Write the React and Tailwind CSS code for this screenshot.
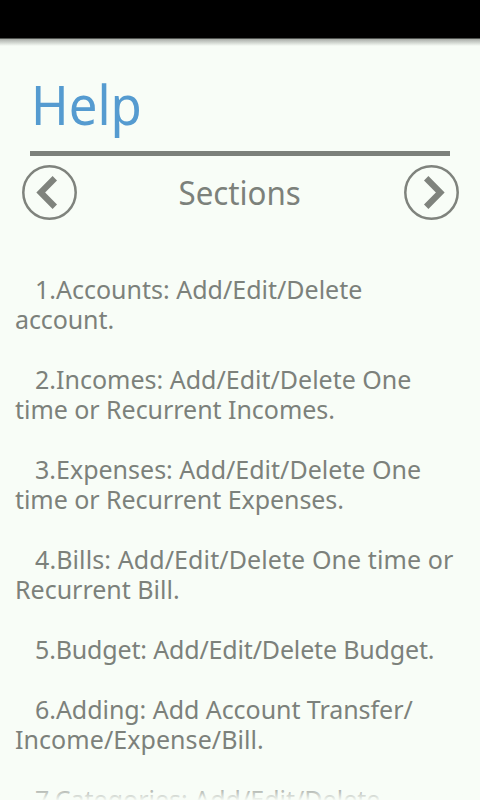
const sections = [
  { first: "1.Accounts: Add/Edit/Delete", second: "account.", rest: "tracking-[-0.1px]" },
  { first: "2.Incomes: Add/Edit/Delete One", second: "time or Recurrent Incomes.", rest: "tracking-[-0.04px]" },
  { first: "3.Expenses: Add/Edit/Delete One", second: "time or Recurrent Expenses.", rest: "tracking-[-0.06px]" },
  { first: "4.Bills: Add/Edit/Delete One time or", second: "Recurrent Bill.", lead: "tracking-[0.1px]" },
  { first: "5.Budget: Add/Edit/Delete Budget.", lead: "tracking-[-0.16px]" },
  { first: "6.Adding: Add Account Transfer/", second: "Income/Expense/Bill.", lead: "tracking-[-0.05px]", rest: "tracking-[0.06px]" },
  { first: "7.Categories: Add/Edit/Delete" },
];

function Arrow({ flip }) {
  return (
    <svg viewBox="0 0 55 55" className={flip ? "size-[55px] -scale-x-100" : "size-[55px]"} fill="none" stroke="#7f837d">
      <circle cx="27.5" cy="27.5" r="26.2" strokeWidth="2.5" />
      <path d="M32.8 13.2 L18.7 27.5 L32.8 41.8" strokeWidth="6.2" />
    </svg>
  );
}

export default function App() {
  return (
    <div className="relative flex h-[800px] w-[480px] flex-col overflow-hidden bg-[#f8fdf7] font-['Noto_Sans',sans-serif] text-[#7c817b]">
      <div className="h-[38px] shrink-0 bg-black" />
      <div className="h-px shrink-0 bg-[#50534f]" />
      <div className="h-[7px] shrink-0 bg-linear-to-b from-[#a9ada8] to-[#f8fdf7]" />
      <h1 className="mx-[30px] h-[110px] shrink-0 border-b-5 border-[#7c817b] pt-[19px] pl-px text-[55px] leading-[78px] text-[#559bd0]">
        <span className="inline-block origin-left scale-x-[0.925]">Help</span>
      </h1>
      <div className="mt-[9px] flex h-[55px] shrink-0 items-center justify-between pr-[21px] pl-[22px]">
        <Arrow />
        <span className="scale-x-[0.947] pr-[2px] text-[33px] leading-[55px]">Sections</span>
        <Arrow flip />
      </div>
      <div className="mt-[54px] shrink-0 px-[15px] text-[25px] leading-[30px] whitespace-nowrap">
        {sections.map(({ first, second, lead = "", rest = "" }) => (
          <p key={first} className="mb-[30px]">
            <span className={"block pl-5 " + lead}>{first}</span>
            {second && <span className={"block " + rest}>{second}</span>}
          </p>
        ))}
      </div>
      <div className="absolute inset-x-0 bottom-0 h-[18px] bg-linear-to-b from-transparent to-[#f8fdf7]/95" />
    </div>
  );
}
